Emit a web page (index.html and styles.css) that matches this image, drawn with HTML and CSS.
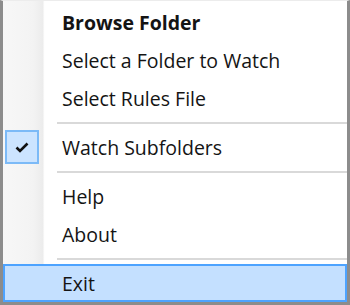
FILE: index.html
```html
<!doctype html>
<html>
  <head>
    <title>Tray menu</title>
    <link rel="stylesheet" href="styles.css">
  </head>
  <body>
    <div class="menu">
      <div class="item bold">Browse Folder</div>
      <div class="item">Select a Folder to Watch</div>
      <div class="item">Select Rules File</div>
      <div class="sep"></div>
      <div class="item">
        <span class="check">
          <svg width="14" height="11" viewBox="0 0 14 11">
            <polyline points="1.5,5.5 5,9 12.5,1.5" fill="none" stroke="#111" stroke-width="2.6"/>
          </svg>
        </span>
        Watch Subfolders
      </div>
      <div class="sep"></div>
      <div class="item">Help</div>
      <div class="item">About</div>
      <div class="sep"></div>
      <div class="item hover">Exit</div>
    </div>
  </body>
</html>
```

FILE: styles.css
```css
body {
  margin: 0;
  font-family: 'Open Sans', 'Noto Sans', sans-serif;
}

.menu {
  width: 350px;
  height: 305px;
  box-sizing: border-box;
  border: 3px solid #8c8c8c;
  border-top: 1px solid #ececec;
  padding-top: 2px;
  background:
    linear-gradient(90deg, #f7f7f7 0px, #f3f3f3 30px, #ececec 40px, #fdfdfd 41px, #fff 42px) no-repeat;
  background-size: 42px 100%;
  background-color: #fff;
  display: flex;
  flex-direction: column;
}

.item {
  position: relative;
  height: 38px;
  box-sizing: border-box;
  display: flex;
  align-items: center;
  padding-left: 59px;
  font-size: 19.5px;
  color: #141414;
}

.bold {
  font-weight: bold;
}

.sep {
  height: 2px;
  margin: 5px 0 4px 54px;
  background: #d9d9d9;
}

.check {
  position: absolute;
  left: 2px;
  top: 2px;
  width: 34px;
  height: 34px;
  box-sizing: border-box;
  border: 2px solid #7cbaf7;
  background: #cce4ff;
  display: flex;
  align-items: center;
  justify-content: center;
}

.hover {
  border: 2px solid #4da3ff;
  background: #c4e0ff;
  padding-left: 57px;
}
```
